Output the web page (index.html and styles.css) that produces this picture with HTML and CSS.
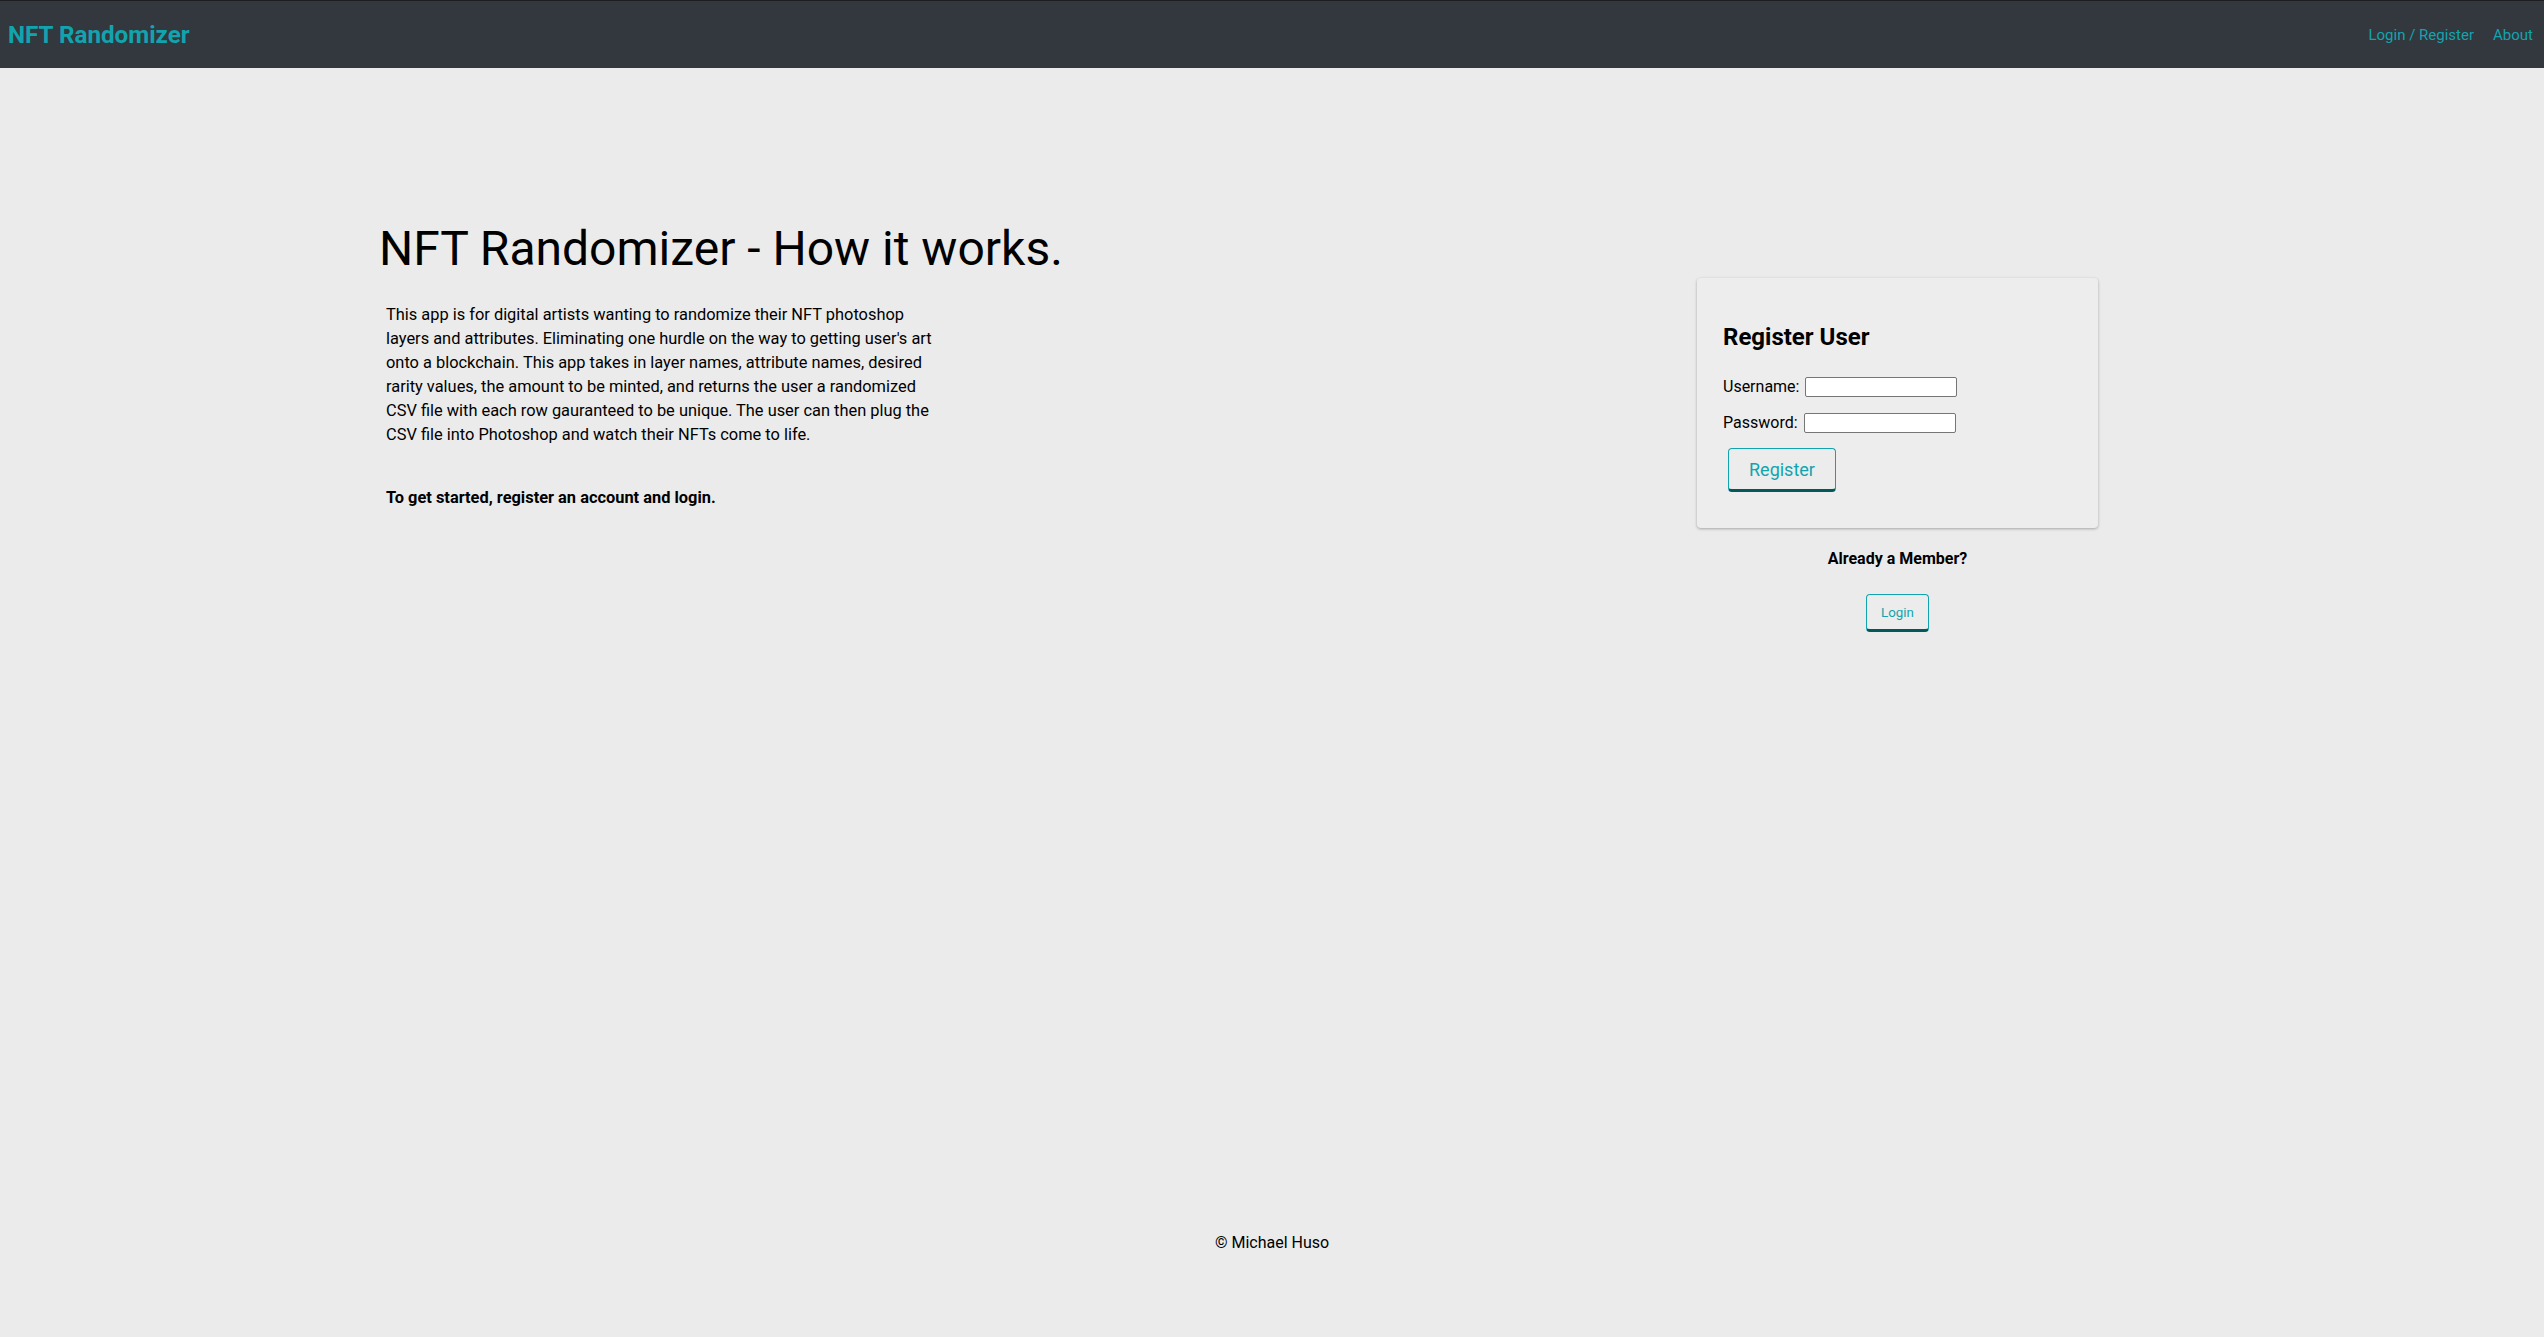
FILE: index.html
```html
<!DOCTYPE html>
<html lang="en">
<head>
<meta charset="utf-8">
<title>NFT Randomizer</title>
<link rel="stylesheet" href="styles.css">
</head>
<body>
<header class="navbar">
  <a class="brand" href="#">NFT Randomizer</a>
  <nav class="nav-links">
    <a href="#">Login / Register</a>
    <a href="#">About</a>
  </nav>
</header>
<main class="main">
  <section class="intro">
    <h1 class="title">NFT Randomizer - How it works.</h1>
    <p class="desc">This app is for digital artists wanting to randomize their NFT photoshop layers and attributes. Eliminating one hurdle on the way to getting user's art onto a blockchain. This app takes in layer names, attribute names, desired rarity values, the amount to be minted, and returns the user a randomized CSV file with each row gauranteed to be unique. The user can then plug the CSV file into Photoshop and watch their NFTs come to life.</p>
    <p class="cta">To get started, register an account and login.</p>
  </section>
  <aside class="auth">
    <form class="card">
      <h2 class="card-title">Register User</h2>
      <div class="field">
        <label class="field-label" for="u">Username:</label>
        <input class="field-input" id="u" type="text">
      </div>
      <div class="field">
        <label class="field-label" for="p">Password:</label>
        <input class="field-input" id="p" type="password">
      </div>
      <button class="btn btn-lg" type="button">Register</button>
    </form>
    <p class="member">Already a Member?</p>
    <button class="btn btn-sm" type="button">Login</button>
  </aside>
</main>
<footer class="footer">© Michael Huso</footer>
</body>
</html>
```
FILE: styles.css
```css
* { box-sizing: border-box; }
html, body { margin: 0; padding: 0; }
body {
  font-family: Roboto, "Noto Sans", Arial, sans-serif;
  background: #ebebeb;
  color: #000;
  min-height: 100vh;
  display: flex;
  flex-direction: column;
}
.navbar {
  height: 68px;
  border-top: 1px solid #1c1d20;
  background: #33373e;
  display: flex;
  align-items: center;
  justify-content: space-between;
  padding: 0 11px 0 8px;
}
.brand {
  color: #12a4ae;
  font-weight: 700;
  font-size: 24.2px;
  text-decoration: none;
}
.nav-links { display: flex; gap: 19px; }
.nav-links a {
  color: #12a4ae;
  font-size: 15px;
  text-decoration: none;
}
.main {
  flex: 1;
  display: flex;
  padding: 153px 446px 0 379px;
}
.intro { flex: 1; }
.title {
  margin: 0;
  font-size: 48px;
  font-weight: 400;
  line-height: 56px;
}
.desc {
  margin: 25.5px 0 0 7px;
  width: 553px;
  font-size: 16.4px;
  line-height: 24px;
}
.cta {
  margin: 39px 0 0 7px;
  font-size: 16.4px;
  line-height: 24px;
  font-weight: 700;
}
.auth {
  width: 401px;
  display: flex;
  flex-direction: column;
  align-items: center;
  padding-top: 57px;
}
.card {
  width: 100%;
  background: #ededed;
  border-radius: 4px;
  box-shadow: 0 1px 3px rgba(0,0,0,0.3);
  padding: 45px 24px 36px 26px;
  display: flex;
  flex-direction: column;
  align-items: flex-start;
}
.card-title {
  margin: 0 0 26px;
  font-size: 24px;
  font-weight: 700;
  line-height: 28px;
}
.field {
  display: flex;
  align-items: center;
  gap: 6px;
  margin-bottom: 16px;
}
.field + .field { margin-bottom: 15px; }
.field-label {
  font-size: 16px;
  line-height: 20px;
}
.field-input {
  width: 152px;
  height: 20px;
  border: 1px solid #767676;
  border-radius: 2px;
  background: #fff;
  padding: 1px 2px;
  font: 13px Roboto, sans-serif;
}
.btn {
  font-family: Roboto, "Noto Sans", Arial, sans-serif;
  color: #12a4ae;
  background: #ececec;
  border: 1px solid #12a4ae;
  border-bottom: 3px solid #03585b;
  border-radius: 4px;
  cursor: pointer;
}
.btn-lg {
  height: 44px;
  padding: 0 20px;
  font-size: 18px;
  margin-left: 5px;
}
.btn-sm {
  height: 38px;
  padding: 0 14px;
  font-size: 13.33px;
}
.member {
  margin: 21px 0 26px;
  font-size: 16px;
  font-weight: 700;
  line-height: 19px;
}
.footer {
  text-align: center;
  font-size: 16px;
  line-height: 19px;
  padding-bottom: 85px;
}
```
